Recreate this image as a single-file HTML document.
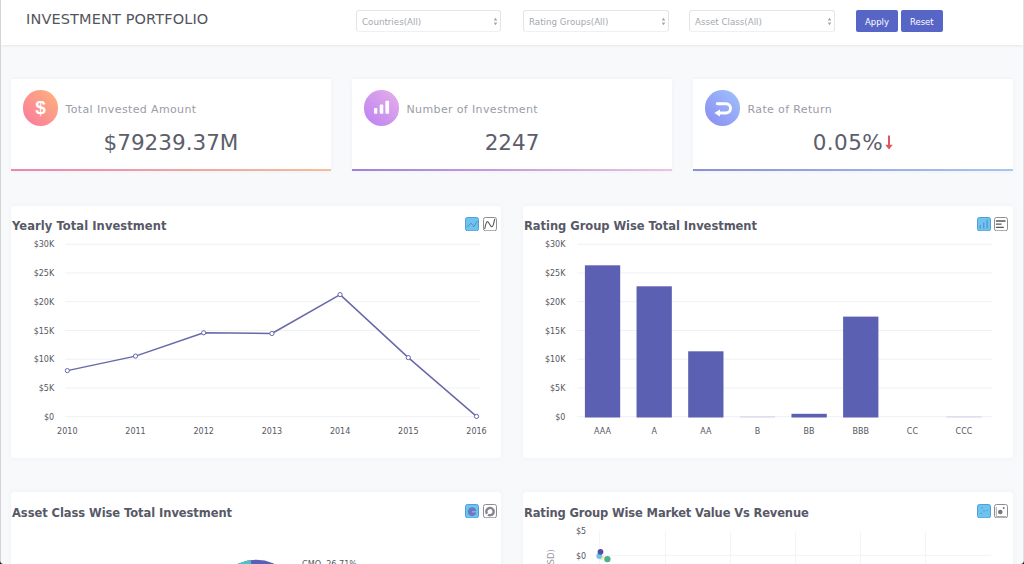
<!DOCTYPE html>
<html lang="en">
<head>
<meta charset="utf-8">
<title>Investment Portfolio</title>
<style>
*{box-sizing:border-box;margin:0;padding:0}
html,body{width:1024px;height:564px;overflow:hidden}
body{background:#f8f9fb;font-family:"DejaVu Sans","Liberation Sans",sans-serif;color:#4a4a5a;position:relative}
.edge{position:absolute;left:0;top:0;width:1px;height:564px;background:#d2d4d8;z-index:5}
.hdr{position:absolute;left:0;top:0;width:1024px;height:45px;background:#fff;box-shadow:0 1px 2.5px rgba(0,0,0,.08)}
.edge2{position:absolute;right:0;top:0;width:1px;height:564px;background:#e1e2e5;z-index:5}
.cnr{position:absolute;bottom:0;width:3px;height:3px;z-index:6}
.hdr h1{position:absolute;left:26px;top:10px;font-size:14.5px;font-weight:400;color:#53545d;letter-spacing:.13px;line-height:18px;white-space:nowrap}
.sel{position:absolute;top:10px;height:22px;width:145px;border:1px solid #e3e5ea;border-bottom-color:#eef0f3;border-radius:3px;background:#fff;font-size:8.7px;color:#a6a8b0;line-height:23px;padding-left:5px;white-space:nowrap}
.sel svg{position:absolute;right:1.8px;top:6px}
.btn{position:absolute;top:10px;height:22px;background:#5765c6;color:#fff;font-size:8.5px;line-height:22px;padding-top:1px;text-align:center;border-radius:2px}
.kpi{position:absolute;top:78.5px;width:320px;height:92.8px;background:#fff;box-shadow:0 0 4px rgba(60,70,110,.05)}
.kpi .bar{position:absolute;left:0;bottom:0;width:100%;height:2px}
.kpi .ic{position:absolute;left:11.6px;top:11.7px;width:35.5px;height:35.5px;border-radius:50%}
.kpi .lb{position:absolute;left:54.5px;top:24.3px;font-size:11px;color:#9a9ca6;line-height:14px;white-space:nowrap;letter-spacing:.37px}
.kpi .vl{position:absolute;left:0;width:100%;top:50.1px;text-align:center;font-size:21.5px;color:#5c5e6b;line-height:28px;white-space:nowrap}
.card{position:absolute;background:#fff;width:490px;border-radius:3px;box-shadow:0 0 5px rgba(60,70,110,.05)}
.card h2{position:absolute;left:1px;top:12.8px;font-size:11.5px;font-weight:700;color:#575967;line-height:14px;white-space:nowrap;letter-spacing:.07px}
.tb{position:absolute;top:10.6px;width:14px;height:14.3px}
.tb svg{position:absolute;left:0;top:0}
svg text{font-family:"DejaVu Sans","Liberation Sans",sans-serif}
</style>
</head>
<body>
<div class="edge"></div><div class="edge2"></div>
<div class="cnr" style="left:0;background:radial-gradient(circle at 100% 0,rgba(0,0,0,0) 2.4px,#1a1a1a 3.2px)"></div>
<div class="cnr" style="right:0;background:radial-gradient(circle at 0 0,rgba(0,0,0,0) 2.4px,#1a1a1a 3.2px)"></div>
<div class="hdr">
  <h1>INVESTMENT PORTFOLIO</h1>
  <div class="sel" style="left:356px">Countries(All)<svg width="5" height="9" viewBox="0 0 5 9"><path d="M2.5 0.8L4.3 3.6H0.7zM2.5 8.2L4.3 5.4H0.7z" fill="#a4a6ad"/></svg></div>
  <div class="sel" style="left:523px;width:146px">Rating Groups(All)<svg width="5" height="9" viewBox="0 0 5 9"><path d="M2.5 0.8L4.3 3.6H0.7zM2.5 8.2L4.3 5.4H0.7z" fill="#a4a6ad"/></svg></div>
  <div class="sel" style="left:689px;width:145.5px">Asset Class(All)<svg width="5" height="9" viewBox="0 0 5 9"><path d="M2.5 0.8L4.3 3.6H0.7zM2.5 8.2L4.3 5.4H0.7z" fill="#a4a6ad"/></svg></div>
  <div class="btn" style="left:856px;width:42px">Apply</div>
  <div class="btn" style="left:900.5px;width:42.5px">Reset</div>
</div>

<!-- KPI cards -->
<div class="kpi" style="left:11px">
  <div class="ic" style="background:linear-gradient(45deg,#fa78a0,#fdb47a)">
    <svg width="35" height="35" viewBox="0 0 35 35"><text x="17.6" y="24.2" text-anchor="middle" font-size="19" font-weight="700" fill="#fff" style="font-family:'Liberation Sans',sans-serif">$</text></svg>
  </div>
  <div class="lb">Total Invested Amount</div>
  <div class="vl">$79239.37M</div>
  <div class="bar" style="background:linear-gradient(90deg,#ea86b2,#f6bd97)"></div>
</div>
<div class="kpi" style="left:352px">
  <div class="ic" style="background:linear-gradient(45deg,#bb80f3,#e6b0e8)">
    <svg width="35" height="35" viewBox="0 0 35 35"><rect x="10" y="18" width="3.3" height="5.8" rx=".8" fill="#fff"/><rect x="15.700" y="14.600" width="3.600" height="9.200" rx=".8" fill="#fff"/><rect x="21.400" y="10.700" width="3.700" height="13.100" rx=".8" fill="#fff"/></svg>
  </div>
  <div class="lb">Number of Investment</div>
  <div class="vl">2247</div>
  <div class="bar" style="background:linear-gradient(90deg,#a17fdc,#ecc3df)"></div>
</div>
<div class="kpi" style="left:693px">
  <div class="ic" style="background:linear-gradient(45deg,#8a8cf4,#a0c2fa)">
    <svg width="35" height="35" viewBox="0 0 35 35"><path d="M12.3 13.7H20.900a4.650 4.650 0 0 1 0 9.300H14.500" fill="none" stroke="#fff" stroke-width="2.900" stroke-linecap="round"/><path d="M15 19.600L9.300 23l5.700 3.400z" fill="#fff"/></svg>
  </div>
  <div class="lb">Rate of Return</div>
  <div class="vl" style="letter-spacing:.45px">0.05%<svg width="8" height="15" viewBox="0 0 8 15" style="margin-left:2.2px;vertical-align:-0.5px"><path d="M3 0.6h2v9.200h2.800L4 14.600 0.200 9.800H3z" fill="#dc5663"/></svg></div>
  <div class="bar" style="background:linear-gradient(90deg,#8d8fd6,#a8c6ee)"></div>
</div>

<!-- Chart 1: line -->
<div class="card" style="left:11px;top:206px;height:252px">
  <h2>Yearly Total Investment</h2>
  <div class="tb" style="left:454px"><svg width="14" height="14.3" viewBox="0 0 14 14.3"><rect x=".5" y=".5" width="13" height="13.3" rx="2" fill="#6fc3f0" stroke="#4c9fd8"/><polyline points="2,10.3 6,6.1 8.8,9.8 12.2,4.1" fill="none" stroke="#5a8db8" stroke-width="1"/></svg></div>
  <div class="tb" style="left:472px"><svg width="14" height="14.3" viewBox="0 0 14 14.3"><rect x=".5" y=".5" width="13" height="13.3" rx="2" fill="#fff" stroke="#8c8c90"/><path d="M1.7 12C2.6 7 3.300 4.600 4.500 4.600C6 4.600 7 9.800 8.800 9.800C10.400 9.800 10.800 5 11.800 2" fill="none" stroke="#55565c" stroke-width="1.100"/></svg></div>
  <svg width="490" height="252" viewBox="0 0 490 252" style="position:absolute;left:0;top:0">
    <g stroke="#f0f1f5" stroke-width="1">
      <line x1="54" x2="469" y1="38.20" y2="38.20"/><line x1="54" x2="469" y1="66.95" y2="66.95"/><line x1="54" x2="469" y1="95.70" y2="95.70"/><line x1="54" x2="469" y1="124.45" y2="124.45"/><line x1="54" x2="469" y1="153.20" y2="153.20"/><line x1="54" x2="469" y1="181.95" y2="181.95"/><line x1="54" x2="469" y1="210.70" y2="210.70"/>
    </g>
    <g font-size="8" fill="#55575f" text-anchor="end">
      <text x="43.2" y="41.30">$30K</text><text x="43.2" y="70.05">$25K</text><text x="43.2" y="98.80">$20K</text><text x="43.2" y="127.55">$15K</text><text x="43.2" y="156.30">$10K</text><text x="43.2" y="185.05">$5K</text><text x="43.2" y="213.80">$0</text>
    </g>
    <g font-size="8" fill="#55575f" text-anchor="middle">
      <text x="56.3" y="227.7">2010</text><text x="124.5" y="227.7">2011</text><text x="192.7" y="227.7">2012</text><text x="260.9" y="227.7">2013</text><text x="329.1" y="227.7">2014</text><text x="397.3" y="227.7">2015</text><text x="465.5" y="227.7">2016</text>
    </g>
    <polyline fill="none" stroke="#6668a8" stroke-width="1.45" stroke-linejoin="round" points="56.3,164.6 124.5,150.1 192.7,126.8 260.9,127.5 329.1,88.6 397.3,151.6 465.5,210.4"/>
    <g fill="#fff" stroke="#6668a8" stroke-width="1">
      <circle cx="56.3" cy="164.6" r="2.1"/><circle cx="124.5" cy="150.1" r="2.1"/><circle cx="192.7" cy="126.8" r="2.1"/><circle cx="260.9" cy="127.5" r="2.1"/><circle cx="329.1" cy="88.6" r="2.1"/><circle cx="397.3" cy="151.6" r="2.1"/><circle cx="465.5" cy="210.4" r="2.1"/>
    </g>
  </svg>
</div>

<!-- Chart 2: bar -->
<div class="card" style="left:523px;top:206px;height:252px">
  <h2 style="letter-spacing:-.035px">Rating Group Wise Total Investment</h2>
  <div class="tb" style="left:453.6px"><svg width="14" height="14.3" viewBox="0 0 14 14.3"><rect x=".5" y=".5" width="13" height="13.3" rx="2" fill="#6fc3f0" stroke="#4c9fd8"/><path d="M3.300 8.100V11.500M6.700 5.500V11.500M10.100 2.700V11.500" stroke="#5b93c9" stroke-width="1.300" fill="none"/></svg></div>
  <div class="tb" style="left:471.2px"><svg width="14" height="14.3" viewBox="0 0 14 14.3"><rect x=".5" y=".5" width="13" height="13.3" rx="2" fill="#fff" stroke="#8c8c90"/><path d="M1.900 4H11.500M1.900 7.200H7.600M1.900 10.300H9.800" stroke="#55565c" stroke-width="1.300" fill="none"/></svg></div>
  <svg width="490" height="252" viewBox="0 0 490 252" style="position:absolute;left:0;top:0">
    <g stroke="#f0f1f5" stroke-width="1">
      <line x1="54" x2="469" y1="38.20" y2="38.20"/><line x1="54" x2="469" y1="66.95" y2="66.95"/><line x1="54" x2="469" y1="95.70" y2="95.70"/><line x1="54" x2="469" y1="124.45" y2="124.45"/><line x1="54" x2="469" y1="153.20" y2="153.20"/><line x1="54" x2="469" y1="181.95" y2="181.95"/><line x1="54" x2="469" y1="210.70" y2="210.70"/>
    </g>
    <g font-size="8" fill="#55575f" text-anchor="end">
      <text x="42.4" y="41.30">$30K</text><text x="42.4" y="70.05">$25K</text><text x="42.4" y="98.80">$20K</text><text x="42.4" y="127.55">$15K</text><text x="42.4" y="156.30">$10K</text><text x="42.4" y="185.05">$5K</text><text x="42.4" y="213.80">$0</text>
    </g>
    <g fill="#5c60b3">
      <rect x="61.90" y="59.30" width="35.30" height="152.20"/><rect x="113.54" y="80.30" width="35.30" height="131.20"/><rect x="165.18" y="145.30" width="35.30" height="66.20"/><rect x="216.82" y="210.3" width="35.30" height="1.2" fill="#d3d5ec"/><rect x="268.46" y="207.80" width="35.30" height="3.70"/><rect x="320.10" y="110.60" width="35.30" height="100.90"/><rect x="423.38" y="210.3" width="35.30" height="1.2" fill="#d3d5ec"/>
    </g>
    <g font-size="8" fill="#55575f" text-anchor="middle">
      <text x="79.5" y="227.8">AAA</text><text x="131.2" y="227.8">A</text><text x="182.8" y="227.8">AA</text><text x="234.5" y="227.8">B</text><text x="286.1" y="227.8">BB</text><text x="337.7" y="227.8">BBB</text><text x="389.4" y="227.8">CC</text><text x="441.0" y="227.8">CCC</text>
    </g>
  </svg>
</div>

<!-- Chart 3: pie (cut off) -->
<div class="card" style="left:11px;top:492px;height:200px">
  <h2 style="top:14.3px;letter-spacing:-.06px">Asset Class Wise Total Investment</h2>
  <div class="tb" style="left:454px;top:11.6px"><svg width="14" height="14.3" viewBox="0 0 14 14.3"><rect x=".5" y=".5" width="13" height="13.3" rx="2" fill="#6fc3f0" stroke="#4c9fd8"/><circle cx="7.100" cy="7.600" r="4.300" fill="#6c79c2"/><path d="M7.100 7.200H11.600V8.400H7.100z" fill="#84c6ee"/></svg></div>
  <div class="tb" style="left:472px;top:11.6px"><svg width="14" height="14.3" viewBox="0 0 14 14.3"><rect x=".5" y=".5" width="13" height="13.3" rx="2" fill="#fff" stroke="#8c8c90"/><circle cx="7" cy="7.600" r="3.650" fill="none" stroke="#85858f" stroke-width="2.400" stroke-dasharray="19.400 1.300 1.800 0.430" transform="rotate(170 7 7.600)"/></svg></div>
  <svg width="490" height="72" viewBox="0 0 490 72" style="position:absolute;left:0;top:0">
    <text x="291" y="75.2" font-size="8.1" fill="#55575f">CMO, 26.71%</text>
    <circle cx="245.2" cy="111.8" r="44" fill="#5c5fb5"/>
    <path d="M245.2 111.8 L239.7 68.15 A44 44 0 0 0 205 93.9 Z" fill="#4cc4c6"/>
  </svg>
</div>

<!-- Chart 4: scatter (cut off) -->
<div class="card" style="left:523px;top:492px;height:200px">
  <h2 style="top:14.3px;letter-spacing:-.145px">Rating Group Wise Market Value Vs Revenue</h2>
  <div class="tb" style="left:453.6px;top:11.6px"><svg width="14" height="14.3" viewBox="0 0 14 14.3"><rect x=".5" y=".5" width="13" height="13.3" rx="2" fill="#6fc3f0" stroke="#4c9fd8"/><g fill="#4f86b4"><circle cx="5" cy="3.800" r=".65"/><circle cx="7" cy="6.900" r=".65"/><circle cx="10.100" cy="6.600" r=".65"/><circle cx="4.200" cy="9.500" r=".65"/></g></svg></div>
  <div class="tb" style="left:471.2px;top:11.6px"><svg width="14" height="14.3" viewBox="0 0 14 14.3"><rect x=".5" y=".5" width="13" height="13.3" rx="2" fill="#fff" stroke="#8c8c90"/><path d="M2.300 2.800V12.500H12" fill="none" stroke="#85858c" stroke-width=".7"/><circle cx="6.300" cy="8" r="2.300" fill="#77777f"/><circle cx="9.700" cy="4" r="1" fill="#77777f"/></svg></div>
  <svg width="490" height="72" viewBox="0 0 490 72" style="position:absolute;left:0;top:0">
    <g stroke="#f3f4f7" stroke-width="1">
      <line x1="76" x2="468" y1="63.5" y2="63.5"/>
      <line x1="76.5" x2="76.5" y1="39.5" y2="72"/><line x1="142.500" x2="142.500" y1="39.5" y2="72"/><line x1="207.500" x2="207.500" y1="39.5" y2="72"/><line x1="272.500" x2="272.500" y1="39.5" y2="72"/><line x1="337.500" x2="337.500" y1="39.5" y2="72"/><line x1="402.500" x2="402.500" y1="39.5" y2="72"/>
    </g>
    <g font-size="8" fill="#55575f">
      <text x="53" y="42.4">$5</text><text x="53" y="67.2">$0</text>
      <text transform="translate(31.3,72.5) rotate(-90)" fill="#9a9ba3" font-size="8.5">SD)</text>
    </g>
    <circle cx="78.2" cy="65.2" r="2.6" fill="#efeaa6"/>
    <circle cx="76.2" cy="63.9" r="2.9" fill="#6fc1ee"/>
    <circle cx="77.5" cy="59.8" r="2.9" fill="#4e50a8"/>
    <circle cx="84.4" cy="67.1" r="3.2" fill="#4fb08a"/>
  </svg>
</div>
</body>
</html>
